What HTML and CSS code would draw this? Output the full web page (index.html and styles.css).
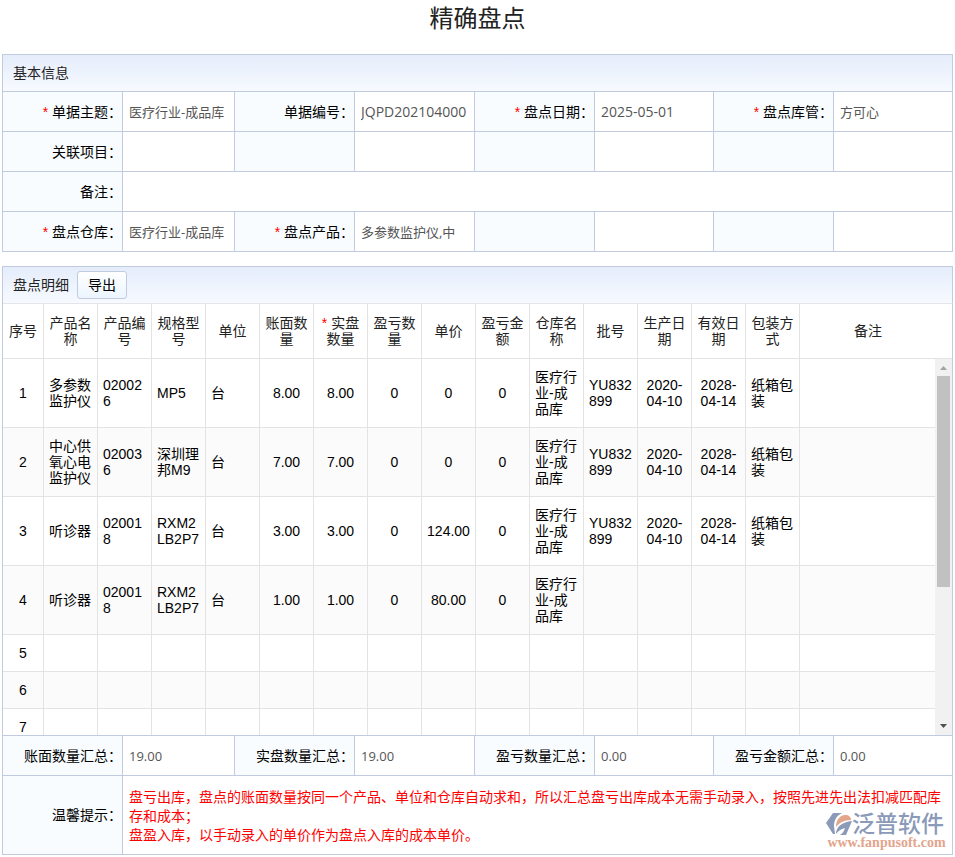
FILE: index.html
```html
<!DOCTYPE html>
<html lang="zh-CN">
<head>
<meta charset="utf-8">
<title>精确盘点</title>
<link rel="stylesheet" href="styles.css">
</head>
<body>
<main class="page">
  <h1 class="page-title">精确盘点</h1>

  <section class="panel">
    <header class="panel-head"><h2>基本信息</h2></header>
    <div class="form-grid">
      <label class="label" for="subject"><i>*</i> 单据主题：</label>
      <div class="value"><input id="subject" value="医疗行业-成品库" readonly></div>
      <label class="label" for="number">单据编号：</label>
      <div class="value"><input class="code" id="number" value="JQPD202104000" readonly></div>
      <label class="label" for="date"><i>*</i> 盘点日期：</label>
      <div class="value"><input class="code" id="date" value="2025-05-01" readonly></div>
      <label class="label" for="keeper"><i>*</i> 盘点库管：</label>
      <div class="value"><input id="keeper" value="方可心" readonly></div>

      <label class="label" for="project">关联项目：</label>
      <div class="value"><input id="project" readonly></div>
      <div class="label"></div><div class="value"></div>
      <div class="label"></div><div class="value"></div>
      <div class="label"></div><div class="value"></div>

      <label class="label" for="remark">备注：</label>
      <div class="value wide"><input id="remark" readonly></div>

      <label class="label" for="store"><i>*</i> 盘点仓库：</label>
      <div class="value"><input id="store" value="医疗行业-成品库" readonly></div>
      <label class="label" for="product"><i>*</i> 盘点产品：</label>
      <div class="value"><input id="product" value="多参数监护仪,中" readonly></div>
      <div class="label"></div><div class="value"></div>
      <div class="label"></div><div class="value"></div>
    </div>
  </section>

  <section class="panel">
    <header class="panel-head light"><h2>盘点明细</h2><button class="export" type="button">导出</button></header>
    <table class="detail head">
      <colgroup><col class="c-index"><col span="14" class="c-data"><col></colgroup>
      <thead>
        <tr><th>序号</th><th>产品名称</th><th>产品编号</th><th>规格型号</th><th>单位</th><th>账面数量</th><th><i>*</i> 实盘数量</th><th>盈亏数量</th><th>单价</th><th>盈亏金额</th><th>仓库名称</th><th>批号</th><th>生产日期</th><th>有效日期</th><th>包装方式</th><th class="memo">备注</th></tr>
      </thead>
    </table>
    <div class="detail-body">
      <div class="detail-rows">
        <table class="detail">
          <colgroup><col class="c-index"><col span="14" class="c-data"><col></colgroup>
          <tbody>
            <tr class="tall"><td>1</td><td class="l">多参数监护仪</td><td class="l">020026</td><td class="l">MP5</td><td class="l">台</td><td>8.00</td><td>8.00</td><td>0</td><td>0</td><td>0</td><td class="l">医疗行业-成品库</td><td class="l">YU832899</td><td class="d">2020-04-10</td><td class="d">2028-04-14</td><td class="l">纸箱包装</td><td></td></tr>
            <tr class="tall"><td>2</td><td class="l">中心供氧心电监护仪</td><td class="l">020036</td><td class="l">深圳理邦M9</td><td class="l">台</td><td>7.00</td><td>7.00</td><td>0</td><td>0</td><td>0</td><td class="l">医疗行业-成品库</td><td class="l">YU832899</td><td class="d">2020-04-10</td><td class="d">2028-04-14</td><td class="l">纸箱包装</td><td></td></tr>
            <tr class="tall"><td>3</td><td class="l">听诊器</td><td class="l">020018</td><td class="l">RXM2LB2P7</td><td class="l">台</td><td>3.00</td><td>3.00</td><td>0</td><td>124.00</td><td>0</td><td class="l">医疗行业-成品库</td><td class="l">YU832899</td><td class="d">2020-04-10</td><td class="d">2028-04-14</td><td class="l">纸箱包装</td><td></td></tr>
            <tr class="tall"><td>4</td><td class="l">听诊器</td><td class="l">020018</td><td class="l">RXM2LB2P7</td><td class="l">台</td><td>1.00</td><td>1.00</td><td>0</td><td>80.00</td><td>0</td><td class="l">医疗行业-成品库</td><td></td><td></td><td></td><td></td><td></td></tr>
            <tr><td>5</td><td></td><td></td><td></td><td></td><td></td><td></td><td></td><td></td><td></td><td></td><td></td><td></td><td></td><td></td><td></td></tr>
            <tr><td>6</td><td></td><td></td><td></td><td></td><td></td><td></td><td></td><td></td><td></td><td></td><td></td><td></td><td></td><td></td><td></td></tr>
            <tr><td>7</td><td></td><td></td><td></td><td></td><td></td><td></td><td></td><td></td><td></td><td></td><td></td><td></td><td></td><td></td><td></td></tr>
          </tbody>
        </table>
      </div>
      <div class="scrollbar" aria-hidden="true">
        <svg class="arrow up" viewBox="0 0 17 17"><path d="M5 11 8.500 7 12 11z"/></svg>
        <div class="thumb"></div>
        <svg class="arrow down" viewBox="0 0 17 17"><path d="M5 6 8.500 10 12 6z"/></svg>
      </div>
    </div>
    <div class="form-grid">
      <label class="label" for="sum-book">账面数量汇总：</label>
      <div class="value"><input id="sum-book" value="19.00" readonly></div>
      <label class="label" for="sum-real">实盘数量汇总：</label>
      <div class="value"><input id="sum-real" value="19.00" readonly></div>
      <label class="label" for="sum-diff">盈亏数量汇总：</label>
      <div class="value"><input id="sum-diff" value="0.00" readonly></div>
      <label class="label" for="sum-amount">盈亏金额汇总：</label>
      <div class="value"><input id="sum-amount" value="0.00" readonly></div>
      <div class="label">温馨提示：</div>
      <div class="value wide tips">
        <p>盘亏出库，盘点的账面数量按同一个产品、单位和仓库自动求和，所以汇总盘亏出库成本无需手动录入，按照先进先出法扣减匹配库存和成本；</p>
        <p>盘盈入库，以手动录入的单价作为盘点入库的成本单价。</p>
      </div>
    </div>
    <div class="brand">
      <div class="brand-top">
        <svg viewBox="0 0 26 24"><path class="blue" d="M7 1H16C10 4 8 9 8 14L9 22 7 22 0 11z"/><path class="orange" d="M10 15C10 8 14 3 19 3 23 3 25 5 25 8 18 8 13 11 10 15z"/><path class="blue" d="M10 22C10 15 16 10 26 9L20 23H14C17 21 18 19 19 16 15 17 12 19 10 22z"/></svg>
        <span>泛普软件</span>
      </div>
      <div class="brand-url">www.fanpusoft.com</div>
    </div>
  </section>
</main>
</body>
</html>
```
FILE: styles.css
```css
* { box-sizing: border-box; }

body {
  margin: 0;
  background: #fff;
  color: #000;
  font: 14px/16px "Liberation Sans", "Noto Sans CJK SC", sans-serif;
}

i { color: #f00; font-style: normal; }

.page { padding: 0 2px; }

.page-title {
  margin: 0;
  height: 54px;
  font-size: 24px;
  font-weight: 400;
  line-height: 38px;
  text-align: center;
  color: #222;
}

.panel {
  position: relative;
  margin-bottom: 14px;
  border-top: 1px solid #c0cbdf;
  border-left: 1px solid #c0cbdf;
}
.panel:last-child { margin-bottom: 0; }

.panel-head {
  display: flex;
  align-items: center;
  gap: 8px;
  height: 37px;
  padding-left: 10px;
  border-right: 1px solid #c0cbdf;
  border-bottom: 1px solid #c0cbdf;
  background: linear-gradient(#e5edfb, #f7faff);
}
.panel-head.light { border-bottom-color: #e3e5e8; }
.panel-head h2 { margin: 0; font-size: 14px; font-weight: 400; color: #222; }

.export {
  height: 28px;
  padding: 0 10px;
  border: 1px solid #c0cbdf;
  border-radius: 3px;
  background: linear-gradient(#fff, #ebf5ff);
  color: #000;
  font: inherit;
}

.form-grid {
  display: grid;
  grid-template-columns: 120px 112px 120px 120px 120px 1fr 120px 1fr;
  grid-auto-rows: minmax(40px, auto);
}
.label, .value {
  display: flex;
  align-items: center;
  min-width: 0;
  border-right: 1px solid #c0cbdf;
  border-bottom: 1px solid #c0cbdf;
}
.label { justify-content: flex-end; background: #f8fcff; white-space: pre; }
.value { padding: 0 6px; }
.wide { grid-column: 2 / -1; }

.value input {
  width: 100%;
  height: 24px;
  padding: 0;
  border: 0;
  outline: 0;
  background: transparent;
  color: #555;
  font: 13px "Open Sans", "Noto Sans CJK SC", sans-serif;
}
.value .code { font-size: 14px; }

.tips {
  flex-direction: column;
  align-items: flex-start;
  padding: 12px 6px 9px;
  color: #f00;
  line-height: 19px;
}
.tips p { margin: 0; }

.detail {
  width: 100%;
  table-layout: fixed;
  border-collapse: separate;
  border-spacing: 0;
}
.detail.head { border-right: 1px solid #c0cbdf; }
.c-index { width: 41px; }
.c-data { width: 54px; }
.detail th, .detail td {
  height: 37px;
  padding: 0 5px;
  border-right: 1px solid #e3e3e3;
  border-bottom: 1px solid #e3e3e3;
  font-weight: 400;
  text-align: center;
  vertical-align: middle;
  word-break: break-all;
}
.detail th { height: 55px; color: #222; }
.detail th:last-child, .detail td:last-child { border-right: 0; }
.detail th.memo { padding-right: 21px; }
.detail .tall td { height: 69px; }
.detail td.l { text-align: left; }
.detail td.d { word-break: normal; }
.detail tr:nth-child(even) td { background: #fbfbfb; }

.detail-body {
  display: flex;
  height: 377px;
  border-right: 1px solid #c0cbdf;
  border-bottom: 1px solid #c0cbdf;
}
.detail-rows { flex: 1; min-width: 0; overflow: hidden; }

.scrollbar {
  display: flex;
  flex-direction: column;
  width: 17px;
  background: #f1f1f1;
}
.arrow { display: block; width: 17px; height: 17px; }
.up { fill: #a3a3a3; }
.down { margin-top: auto; fill: #505050; }
.thumb { height: 211px; margin: 0 2px; background: #c1c1c1; }

.brand {
  position: absolute;
  right: 6px;
  bottom: 5px;
  width: 121px;
}
.brand-top {
  display: flex;
  align-items: center;
  height: 24px;
  color: #8a9ab8;
  font: 500 23px/24px "Liberation Sans", "Noto Sans CJK SC", sans-serif;
}
.brand-top svg { flex: none; width: 26px; height: 24px; }
.brand-url {
  color: #e3a58c;
  font: bold 14px/14px "Liberation Serif", serif;
  text-align: center;
}
.blue { fill: #8a9ab8; }
.orange { fill: #e3a58c; }
```
